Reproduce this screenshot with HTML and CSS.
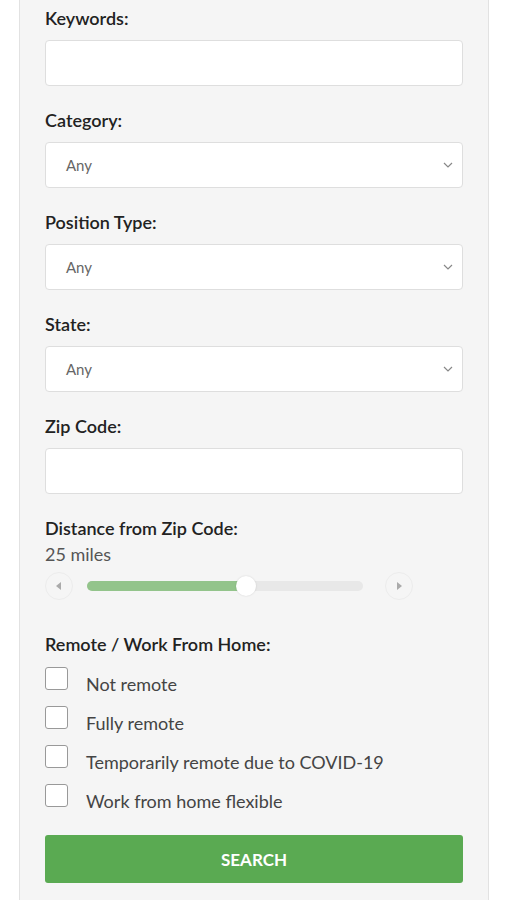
FILE: index.html
```html
<!DOCTYPE html>
<html>
<head>
<meta charset="utf-8">
<link rel="stylesheet" href="styles.css">
</head>
<body>
<div class="panel">
  <div class="field">
    <label class="label">Keywords:</label>
    <div class="input"></div>
  </div>
  <div class="field">
    <label class="label">Category:</label>
    <div class="input select"><span>Any</span><svg class="chev" width="10" height="6" viewBox="0 0 10 6"><path d="M1 1 L5 5 L9 1" fill="none" stroke="#888" stroke-width="1.2"/></svg></div>
  </div>
  <div class="field">
    <label class="label">Position Type:</label>
    <div class="input select"><span>Any</span><svg class="chev" width="10" height="6" viewBox="0 0 10 6"><path d="M1 1 L5 5 L9 1" fill="none" stroke="#888" stroke-width="1.2"/></svg></div>
  </div>
  <div class="field">
    <label class="label">State:</label>
    <div class="input select"><span>Any</span><svg class="chev" width="10" height="6" viewBox="0 0 10 6"><path d="M1 1 L5 5 L9 1" fill="none" stroke="#888" stroke-width="1.2"/></svg></div>
  </div>
  <div class="field">
    <label class="label">Zip Code:</label>
    <div class="input"></div>
  </div>
  <div class="field distance">
    <label class="label">Distance from Zip Code:</label>
    <div class="value">25 miles</div>
    <div class="slider">
      <div class="step"><svg width="6" height="8" viewBox="0 0 6 8"><path d="M5 0 L0 4 L5 8 Z" fill="#aaa"/></svg></div>
      <div class="track"><div class="fill" style="width: 57.5%"></div><div class="thumb" style="left: 57.5%"></div></div>
      <div class="step"><svg width="6" height="8" viewBox="0 0 6 8"><path d="M1 0 L6 4 L1 8 Z" fill="#aaa"/></svg></div>
    </div>
  </div>
  <div class="field remote">
    <label class="label">Remote / Work From Home:</label>
    <div class="checks">
      <div class="check"><span class="box"></span><span class="ctext">Not remote</span></div>
      <div class="check"><span class="box"></span><span class="ctext">Fully remote</span></div>
      <div class="check"><span class="box"></span><span class="ctext">Temporarily remote due to COVID-19</span></div>
      <div class="check"><span class="box"></span><span class="ctext">Work from home flexible</span></div>
    </div>
  </div>
  <div class="button">SEARCH</div>
</div>
</body>
</html>
```
FILE: styles.css
```css
html, body {
  margin: 0;
  padding: 0;
  background: #ffffff;
}
body {
  font-family: Lato, "Liberation Sans", sans-serif;
  color: #222;
}
.panel {
  margin-left: 19px;
  width: 470px;
  height: 900px;
  box-sizing: border-box;
  background: #f5f5f5;
  border-left: 1px solid #e2e2e2;
  border-right: 1px solid #e2e2e2;
  padding: 6px 25px 0 25px;
  display: flex;
  flex-direction: column;
}
.field {
  display: flex;
  flex-direction: column;
  margin-bottom: 22px;
}
.label {
  font-size: 18px;
  font-weight: 600;
  line-height: 24px;
  height: 24px;
  margin-bottom: 10px;
  color: #222;
}
.input {
  height: 46px;
  box-sizing: border-box;
  background: #fff;
  border: 1px solid #dedede;
  border-radius: 4px;
}
.select {
  display: flex;
  align-items: center;
  justify-content: space-between;
  padding: 0 9px 0 20px;
  font-size: 15px;
  color: #666;
}
.chev {
  display: block;
}
.distance .label {
  margin-bottom: 2px;
}
.value {
  font-size: 18px;
  line-height: 24px;
  color: #555;
}
.slider {
  display: flex;
  align-items: center;
  height: 32px;
  margin-top: 4px;
}
.step {
  width: 28px;
  height: 28px;
  border-radius: 50%;
  border: 1px solid #ececec;
  box-sizing: border-box;
  display: flex;
  align-items: center;
  justify-content: center;
  background: #f5f5f5;
}
.track {
  position: relative;
  height: 10px;
  border-radius: 5px;
  background: #e8e8e8;
  width: 276px;
  margin: 0 22px 0 14px;
}
.fill {
  height: 10px;
  border-radius: 5px;
  background: #93c48b;
}
.thumb {
  position: absolute;
  top: -5px;
  width: 20px;
  height: 20px;
  margin-left: -10px;
  border-radius: 50%;
  background: #fff;
  box-shadow: 0 0 2px rgba(0,0,0,0.15);
}
.remote {
  margin-top: 8px;
}
.remote .label {
  margin-bottom: 11px;
}
.checks {
  display: flex;
  flex-direction: column;
  gap: 15px;
}
.check {
  display: flex;
  align-items: flex-start;
  height: 24px;
}
.box {
  width: 23px;
  height: 23px;
  box-sizing: border-box;
  border: 1px solid #999;
  border-radius: 3px;
  background: #fff;
  flex: none;
}
.ctext {
  margin-left: 18px;
  margin-top: 6px;
  font-size: 18px;
  line-height: 22px;
  color: #444;
}
.button {
  margin-top: 5px;
  height: 48px;
  border-radius: 3px;
  background: #5aaa52;
  color: #fff;
  font-weight: 700;
  font-size: 17px;
  display: flex;
  align-items: center;
  justify-content: center;
}
```
